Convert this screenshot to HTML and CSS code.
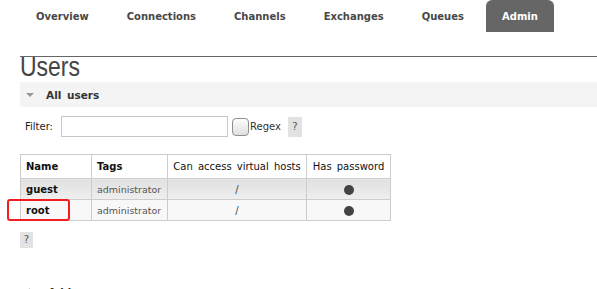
FILE: index.html
```html
<!DOCTYPE html>
<html>
<head>
<meta charset="utf-8">
<link rel="stylesheet" href="styles.css">
</head>
<body>
<div class="nav">
  <a class="tab">Overview</a>
  <a class="tab">Connections</a>
  <a class="tab">Channels</a>
  <a class="tab">Exchanges</a>
  <a class="tab">Queues</a>
  <a class="tab active">Admin</a>
</div>
<div class="main">
  <h1 class="title">Users</h1>
  <h2 class="bar"><span class="tri-down"></span>All users</h2>
  <div class="filter">
    <span class="filter-label">Filter:</span>
    <input class="filter-input" type="text">
    <span class="cb"></span>
    <span class="regex">Regex</span>
    <span class="help">?</span>
  </div>
  <div class="table-wrap">
    <table class="users">
      <colgroup>
        <col class="c1"><col class="c2"><col class="c3"><col class="c4">
      </colgroup>
      <tr class="head">
        <th class="bold">Name</th>
        <th class="bold">Tags</th>
        <th class="center">Can access virtual hosts</th>
        <th class="center">Has password</th>
      </tr>
      <tr class="alt1">
        <td class="name">guest</td>
        <td class="tag">administrator</td>
        <td class="center vh">/</td>
        <td class="center"><span class="dot"></span></td>
      </tr>
      <tr class="alt2">
        <td class="name">root</td>
        <td class="tag">administrator</td>
        <td class="center vh">/</td>
        <td class="center"><span class="dot"></span></td>
      </tr>
    </table>
    <div class="highlight"></div>
  </div>
  <span class="help help-below">?</span>
  <h2 class="collapsed"><span class="tri-right"></span>Add a user</h2>
</div>
</body>
</html>
```

FILE: styles.css
```css
html, body {
  margin: 0;
  padding: 0;
  background: #fff;
  overflow: hidden;
}
body {
  font-family: "DejaVu Sans", Verdana, sans-serif;
  font-size: 10px;
  color: #333;
}
.nav {
  display: flex;
  gap: 6px;
  padding-left: 20px;
  height: 32px;
}
.tab {
  display: block;
  padding: 0 16px;
  line-height: 33px;
  height: 32px;
  font-weight: bold;
  font-size: 10px;
  color: #484848;
}
.tab.active {
  background: #666;
  color: #fff;
  border-radius: 6px 6px 0 0;
}
.main {
  margin: 24px 0 0 20px;
  border-top: 1px solid #666;
  position: relative;
}
.title {
  margin: -2px 0 0 0;
  font-family: "Liberation Sans", Arial, sans-serif;
  font-weight: normal;
  font-size: 28px;
  line-height: 24px;
  height: 24px;
  color: #444;
  transform: scaleX(0.82);
  transform-origin: 0 0;
}
.bar {
  margin: 3px 0 0 0;
  height: 25px;
  background: #f4f4f4;
  display: flex;
  align-items: center;
  font-size: 10.5px;
  font-weight: bold;
  word-spacing: 2px;
  color: #333;
}
.tri-down {
  width: 0;
  height: 0;
  border-left: 4px solid transparent;
  border-right: 4px solid transparent;
  border-top: 4px solid #999;
  margin: 0 12px 0 6px;
}
.filter {
  display: flex;
  align-items: center;
  margin-top: 9px;
  height: 21px;
}
.filter-label {
  margin-left: 5px;
  width: 36px;
  color: #222;
}
.filter-input {
  box-sizing: border-box;
  width: 167px;
  height: 21px;
  margin: 0;
  border: 1px solid #c8c8c8;
  padding: 0;
  background: #fff;
}
.cb {
  box-sizing: border-box;
  width: 17px;
  height: 18px;
  margin-left: 4px;
  border: 1px solid #8f8f8f;
  border-radius: 4px;
  background: linear-gradient(#fdfdfd, #e0e0e0);
}
.regex {
  margin-left: 1px;
  color: #333;
}
.help {
  display: inline-block;
  width: 14px;
  height: 20px;
  line-height: 20px;
  text-align: center;
  background: #e2e2e2;
  color: #555;
  font-size: 10px;
}
.filter .help {
  margin-left: 7px;
}
.table-wrap {
  position: relative;
  margin-top: 17px;
  width: 370px;
}
.users {
  border-collapse: collapse;
  table-layout: fixed;
  width: 370px;
}
.c1 { width: 71px; }
.c2 { width: 76px; }
.c3 { width: 139px; }
.c4 { width: 84px; }
.users th, .users td {
  border: 1px solid #ccc;
  padding: 0 5px;
  text-align: left;
  white-space: nowrap;
  overflow: hidden;
}
.users th {
  height: 23px;
  font-weight: normal;
  color: #111;
  background: #fff;
  word-spacing: 2px;
}
.users th.bold {
  font-weight: bold;
  word-spacing: 0;
}
.users td {
  height: 20px;
}
.users .center {
  text-align: center;
}
.alt1 td {
  background: linear-gradient(#e0e0e0, #efefef);
}
.alt2 td {
  background: #f8f8f8;
}
.name {
  font-weight: bold;
  color: #111;
}
.tag {
  font-size: 9.5px;
  color: #555;
}
.vh {
  color: #444;
}
.dot {
  display: inline-block;
  width: 10px;
  height: 10px;
  border-radius: 50%;
  background: #444;
  vertical-align: middle;
}
.highlight {
  position: absolute;
  left: -13px;
  top: 45px;
  width: 59px;
  height: 18px;
  border: 2px solid #f01e1e;
  border-radius: 3px;
}
.help-below {
  display: block;
  margin-top: 11px;
  height: 16px;
  line-height: 16px;
  width: 13px;
}
.collapsed {
  margin: 31px 0 0 0;
  display: flex;
  align-items: center;
  height: 25px;
  font-size: 10.5px;
  font-weight: bold;
  color: #333;
}
.tri-right {
  width: 0;
  height: 0;
  border-top: 4px solid transparent;
  border-bottom: 4px solid transparent;
  border-left: 4px solid #999;
  margin: 0 15px 0 9px;
}
```
